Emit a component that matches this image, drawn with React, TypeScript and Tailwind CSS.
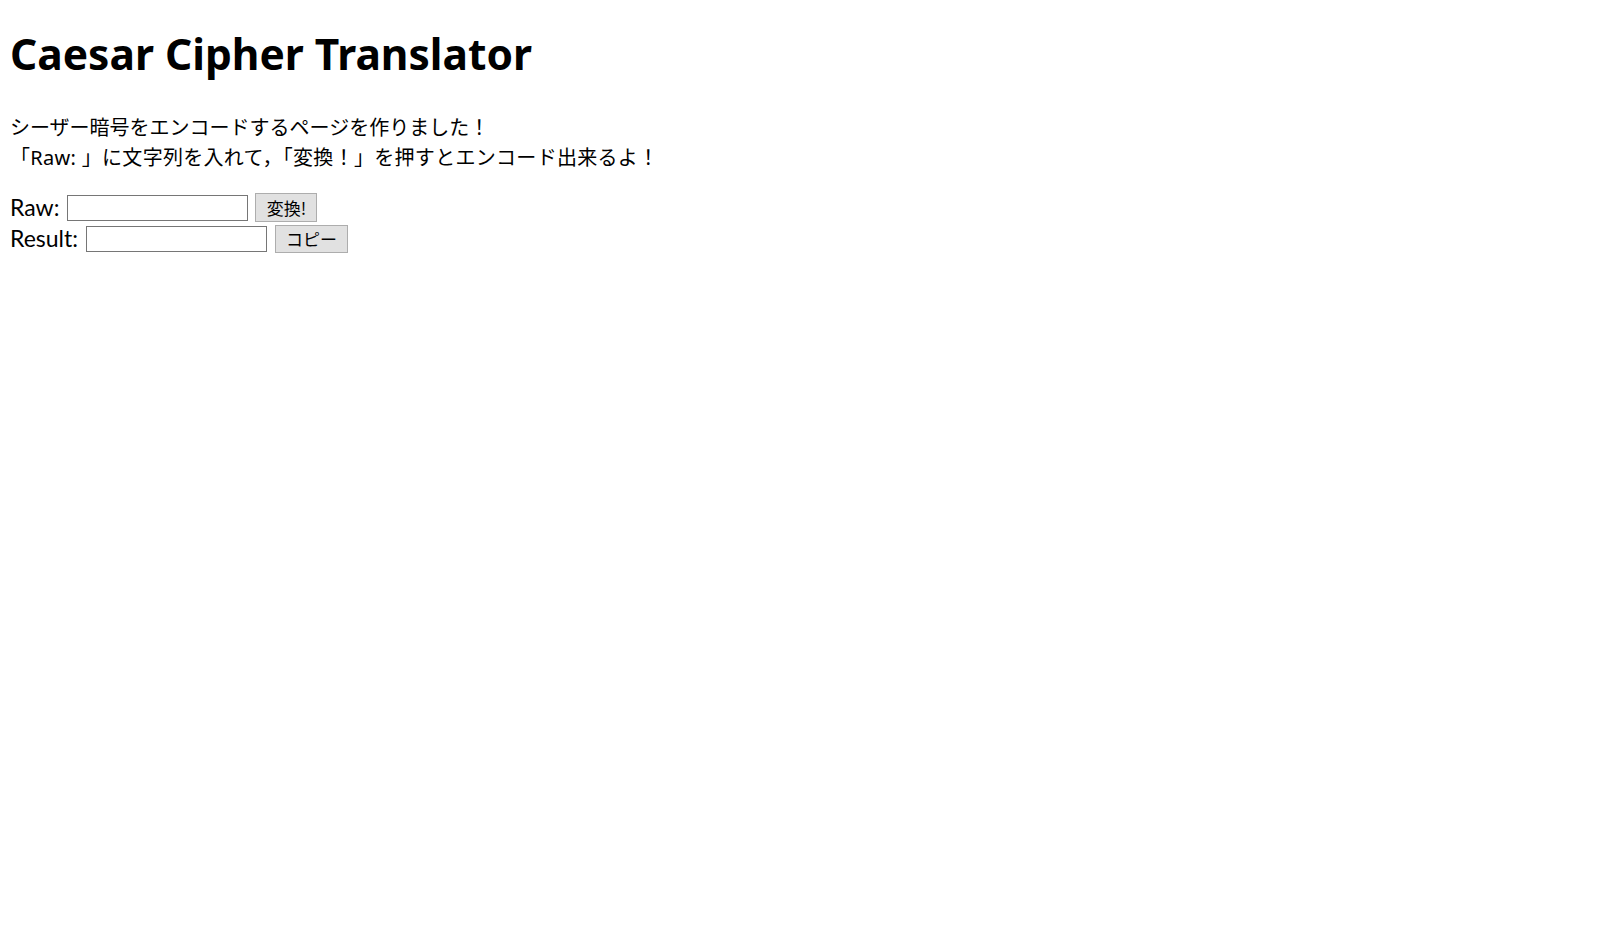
import React, { useState } from "react";

function shift(s: string, n = 3) {
  return s.replace(/[a-zA-Z]/g, (c) => {
    const base = c <= "Z" ? 65 : 97;
    return String.fromCharCode(((c.charCodeAt(0) - base + n) % 26) + base);
  });
}

export default function App() {
  const [raw, setRaw] = useState("");
  const [result, setResult] = useState("");
  return (
    <div className="px-[10px] text-black bg-white min-h-screen">
      <div className="h-[24px]" />
      <h1 className="m-0 h-[60px] leading-[60px] text-[42.5px] font-bold font-['Noto_Sans','Noto_Sans_CJK_JP',sans-serif]">
        Caesar Cipher Translator
      </h1>
      <div className="h-[29px]" />
      <p className="m-0 text-[20px] leading-[30px] font-['Noto_Sans','Noto_Sans_CJK_JP',sans-serif]">
        シーザー暗号をエンコードするページを作りました！
        <br />
        <span className="tracking-[0.3px]">「Raw: 」に文字列を入れて，「変換！」を押すとエンコード出来るよ！</span>
      </p>
      <div className="h-[19px]" />
      <div className="flex items-center h-[31px]">
        <span className="text-[23px] font-['Lato',sans-serif] leading-none">Raw:</span>
        <input
          value={raw}
          onChange={(e) => setRaw(e.target.value)}
          className="ml-[8px] w-[181px] h-[26px] border border-[#767676] bg-white outline-none"
        />
        <button
          onClick={() => setResult(shift(raw))}
          className="ml-[7px] w-[62px] h-[29px] border border-[#adadad] bg-[#e1e1e1] text-[17px] leading-none font-['Noto_Sans_CJK_JP',sans-serif] flex items-center justify-center"
        >
          変換!
        </button>
      </div>
      <div className="flex items-center h-[31px]">
        <span className="text-[23px] font-['Lato',sans-serif] leading-none">Result:</span>
        <input
          value={result}
          readOnly
          className="ml-[8px] w-[181px] h-[26px] border border-[#767676] bg-white outline-none"
        />
        <button
          onClick={() => navigator.clipboard?.writeText(result)}
          className="ml-[8px] w-[73px] h-[28px] border border-[#adadad] bg-[#e1e1e1] text-[17px] leading-none font-['Noto_Sans_CJK_JP',sans-serif] flex items-center justify-center"
        >
          コピー
        </button>
      </div>
    </div>
  );
}
